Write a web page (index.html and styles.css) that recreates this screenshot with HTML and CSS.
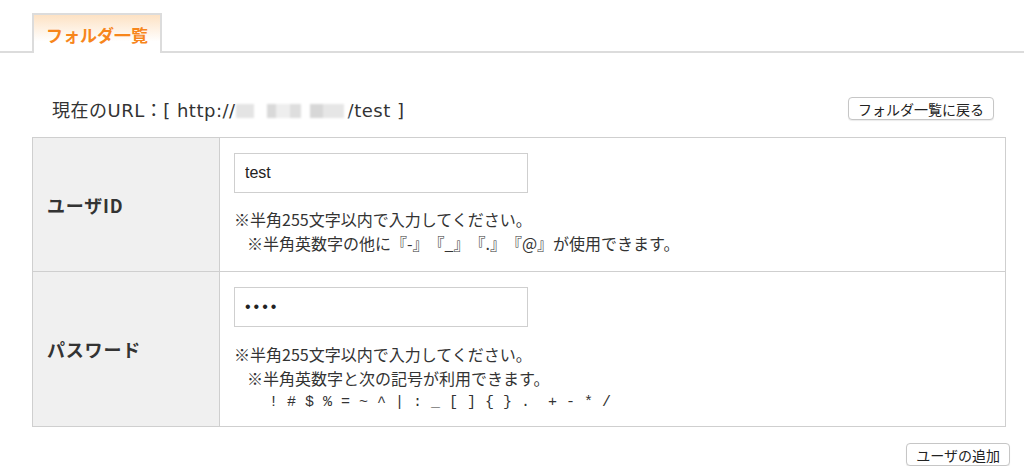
FILE: index.html
```html
<!DOCTYPE html>
<html lang="ja">
<head>
    <meta charset="UTF-8">
    <meta name="viewport" content="width=device-width, initial-scale=1.0">
    <title>ユーザの追加</title>
    <link rel="stylesheet" href="styles.css">
</head>
<body>
    <div class="tabs">
        <div class="tab">フォルダ一覧</div>
    </div>

    <div class="page">
        <div class="url-row">
            <p class="current-url">現在のURL：[ http://<span class="masked"></span>/test ]</p>
            <button type="button" class="btn">フォルダ一覧に戻る</button>
        </div>

        <form id="userForm">
            <table class="form-table">
                <tr>
                    <th>ユーザID</th>
                    <td>
                        <input type="text" class="field" value="test">
                        <p class="note">※半角255文字以内で入力してください。</p>
                        <p class="note indent">※半角英数字の他に『-』『_』『.』『@』が使用できます。</p>
                    </td>
                </tr>
                <tr class="row-pass">
                    <th>パスワード</th>
                    <td>
                        <input type="password" class="field pass" value="test">
                        <p class="note">※半角255文字以内で入力してください。</p>
                        <p class="note indent">※半角英数字と次の記号が利用できます。</p>
                        <p class="note symbols">! # $ % = ~ ^ | : _ [ ] { } .  + - * /</p>
                    </td>
                </tr>
            </table>

            <div class="actions">
                <button type="button" class="btn">ユーザの追加</button>
            </div>
        </form>
    </div>
</body>
</html>
```

FILE: styles.css
```css
body {
    margin: 0;
    font-family: "Liberation Sans", "Noto Sans CJK JP", sans-serif;
    color: #333;
    background-color: #fff;
    text-spacing-trim: space-all;
}
.tabs {
    display: flex;
    padding: 13px 0 0 24px;
    border-bottom: 2px solid #dcdcdc;
}
.tab {
    margin-left: 8px;
    margin-bottom: -2px;
    width: 126px;
    height: 38px;
    line-height: 39px;
    text-align: center;
    border: 2px solid #dcdcdc;
    border-bottom: none;
    background: linear-gradient(#fde2c4, #fff 70%);
    color: #f7861c;
    font-family: "Noto Sans CJK JP", sans-serif;
    font-size: 17px;
    font-weight: bold;
}
.page {
    padding: 0 18px 0 32px;
}
.url-row {
    display: flex;
    justify-content: space-between;
    align-items: center;
    margin-top: 44px;
    height: 23px;
}
.current-url {
    margin: 0 0 0 20px;
    font-family: "DejaVu Sans", "Noto Sans CJK JP", sans-serif;
    font-size: 18px;
    letter-spacing: 0.5px;
    color: #333;
}
.masked {
    display: inline-block;
    width: 112px;
    height: 14px;
    vertical-align: -1px;
    background:
        linear-gradient(90deg, #e4e4e4 0 16%, #fff 16% 28%, #d9d9d9 28% 36%, #eee 36% 48%, #dedede 48% 58%, #fff 58% 66%, #d7d7d7 66% 78%, #e6e6e6 78% 96%, #fff 96%);
    filter: blur(1.2px);
}
.btn {
    height: 23px;
    margin-right: 12px;
    padding: 0 9px;
    background-color: #fff;
    border: 1px solid #c6c6c6;
    border-radius: 4px;
    box-shadow: 0 1px 1px rgba(0, 0, 0, 0.08);
    font-family: "Noto Sans CJK JP", sans-serif;
    font-size: 14px;
    line-height: 20px;
    color: #222;
}
.form-table {
    width: 100%;
    margin-top: 17px;
    border-collapse: collapse;
    border: 1px solid #cfcfcf;
}
.form-table th,
.form-table td {
    border: 1px solid #cfcfcf;
}
.form-table th {
    width: 172px;
    padding: 0 0 0 14px;
    background-color: #f0f0f0;
    text-align: left;
    font-family: "Noto Sans CJK JP", sans-serif;
    font-size: 18px;
    letter-spacing: 0.8px;
    font-weight: bold;
    color: #333;
}
.form-table td {
    padding: 15px 14px 16px;
    vertical-align: top;
}
.row-pass td {
    padding-bottom: 10px;
}
.field {
    display: block;
    width: 294px;
    height: 40px;
    box-sizing: border-box;
    margin-bottom: 14px;
    padding: 0 10px;
    border: 1px solid #cfcfcf;
    font-family: "Liberation Sans", sans-serif;
    font-size: 16px;
    color: #222;
}
.pass {
    letter-spacing: 3px;
}
.row-pass .field {
    margin-bottom: 15px;
}
.note {
    margin: 0;
    font-family: "Noto Sans CJK JP", sans-serif;
    font-size: 16px;
    line-height: 24px;
    color: #333;
}
.indent {
    padding-left: 13px;
}
.symbols {
    padding-left: 35px;
    font-family: "Liberation Mono", monospace;
    font-size: 15px;
    white-space: pre;
    line-height: 26px;
}
.actions {
    display: flex;
    justify-content: flex-end;
    margin-top: 16px;
}
.actions .btn {
    margin-right: -4px;
}
```
